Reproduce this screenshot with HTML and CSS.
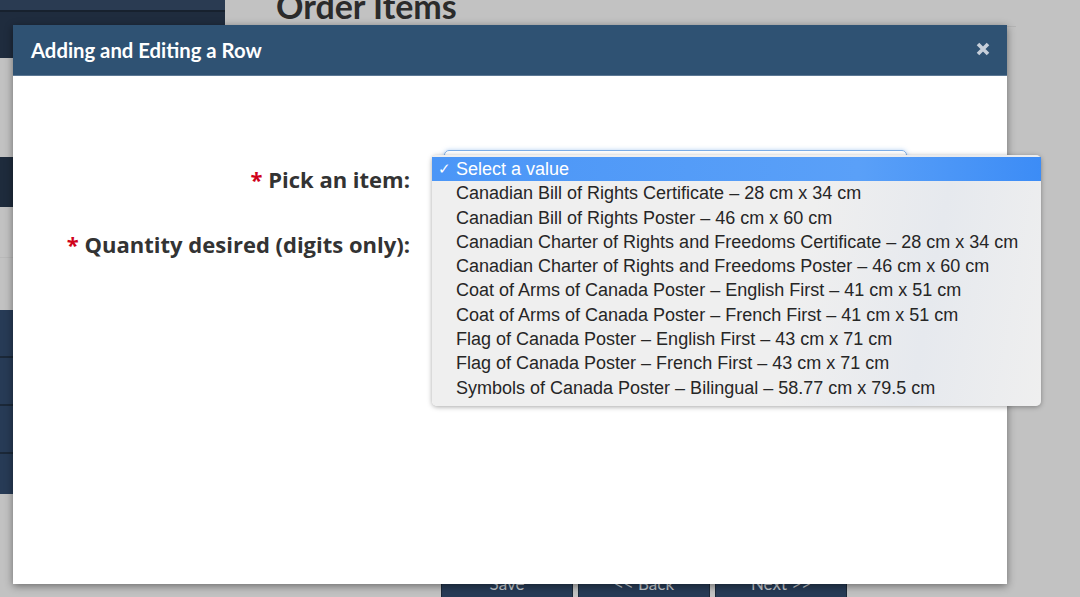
FILE: index.html
```html
<!DOCTYPE html>
<html lang="en">
<head>
  <meta charset="UTF-8">
  <meta name="viewport" content="width=device-width, initial-scale=1.0">
  <title>Order Items</title>
  <link rel="stylesheet" href="styles.css">
</head>
<body>

  <!-- Page behind the dialog (dimmed) -->
  <div class="page">
    <aside class="sidebar">
      <div class="side-top"><span class="side-line"></span></div>
      <div class="side-gap side-gap-1"></div>
      <div class="side-dark"></div>
      <div class="side-gap side-gap-2"></div>
      <div class="side-nav">
        <div class="side-item"></div>
        <div class="side-item"></div>
        <div class="side-item"></div>
        <div class="side-item last"></div>
      </div>
    </aside>

    <main class="main">
      <h1 class="page-title">Order Items</h1>
      <div class="main-spacer"></div>
      <div class="actions">
        <span class="btn">Save</span>
        <span class="btn">&lt;&lt; Back</span>
        <span class="btn">Next &gt;&gt;</span>
      </div>
    </main>
  </div>

  <!-- Modal -->
  <div class="modal">
    <div class="modal-header">
      <h2>Adding and Editing a Row</h2>
      <svg class="close" width="14" height="14" viewBox="0 0 14 14">
        <path d="M2 2 L12 12 M12 2 L2 12" stroke="#c6cfda" stroke-width="3.6" stroke-linecap="butt" fill="none"/>
      </svg>
    </div>

    <div class="modal-body">
      <form class="form-grid">
        <label class="field-label"><span class="req">*</span> Pick an item:</label>
        <div class="select-wrap">
          <div class="select-box"></div>

          <!-- Open dropdown list -->
          <ul class="popup">
            <li class="selected"><span class="check">&#10003;</span>Select a value</li>
            <li>Canadian Bill of Rights Certificate – 28 cm x 34 cm</li>
            <li>Canadian Bill of Rights Poster – 46 cm x 60 cm</li>
            <li>Canadian Charter of Rights and Freedoms Certificate – 28 cm x 34 cm</li>
            <li>Canadian Charter of Rights and Freedoms Poster – 46 cm x 60 cm</li>
            <li>Coat of Arms of Canada Poster – English First – 41 cm x 51 cm</li>
            <li>Coat of Arms of Canada Poster – French First – 41 cm x 51 cm</li>
            <li>Flag of Canada Poster – English First – 43 cm x 71 cm</li>
            <li>Flag of Canada Poster – French First – 43 cm x 71 cm</li>
            <li>Symbols of Canada Poster – Bilingual – 58.77 cm x 79.5 cm</li>
          </ul>
        </div>

        <label class="field-label"><span class="req">*</span> Quantity desired (digits only):</label>
        <div class="qty-wrap"></div>
      </form>
    </div>
  </div>

</body>
</html>
```

FILE: styles.css
```css
:root {
  --dim-bg: #c2c2c2;
  --header-color: #2f5273;
  --nav-dark: #1f2c3e;
  --nav-blue: #273b56;
  --label-color: #333333;
  --req-color: #d0021b;
}

html, body {
  margin: 0;
  padding: 0;
  width: 1080px;
  height: 597px;
  overflow: hidden;
  background-color: var(--dim-bg);
  font-family: 'Open Sans', sans-serif;
}

/* Dimmed page */
.page {
  display: flex;
  height: 597px;
}

.sidebar {
  width: 225px;
  display: flex;
  flex-direction: column;
}

.side-top {
  height: 58px;
  background-color: var(--nav-dark);
  border-top: 10px solid #2a3b52;
  box-sizing: border-box;
  position: relative;
}

.side-line {
  display: block;
  height: 2px;
  background-color: #17212e;
}

.side-gap-1 {
  height: 99px;
}

.side-dark {
  height: 50px;
  background-color: #1e2b3c;
}

.side-gap-2 {
  height: 103px;
  background: linear-gradient(#c2c2c2 50px, #b9b9b9 50px, #b9b9b9 51px, #c2c2c2 51px);
}

.side-item {
  height: 48px;
  background-color: var(--nav-blue);
  border-bottom: 2px solid #1b2838;
  box-sizing: border-box;
}

.side-item.last {
  height: 40px;
  border-bottom: none;
}

.main {
  flex: 1;
  display: flex;
  flex-direction: column;
  padding-left: 51px;
}

.page-title {
  margin: -17px 64px 0 0;
  font-family: 'Lato', sans-serif;
  font-weight: 700;
  font-size: 34px;
  color: #2b2b2b;
  line-height: 46px;
  height: 43px;
  border-bottom: 1px solid #b4b4b4;
}

.main-spacer {
  flex: 1;
}

.actions {
  display: flex;
  gap: 5px;
  margin-left: 165px;
  margin-bottom: -7px;
}

.btn {
  width: 132px;
  height: 42px;
  line-height: 42px;
  text-align: center;
  background-color: var(--nav-blue);
  border: 1px solid #1b2838;
  box-sizing: border-box;
  color: #c4c8cd;
  font-family: 'Lato', sans-serif;
  font-size: 17px;
}

/* Modal */
.modal {
  position: absolute;
  left: 13px;
  top: 25px;
  width: 994px;
  height: 559px;
  background-color: #ffffff;
  box-shadow: 0 2px 8px rgba(0, 0, 0, 0.45);
  display: flex;
  flex-direction: column;
}

.modal-header {
  height: 51px;
  background-color: var(--header-color);
  border-bottom: 1px solid #5c7894;
  box-sizing: border-box;
  display: flex;
  align-items: center;
  justify-content: space-between;
  padding: 0 17px 0 18px;
}

.modal-header h2 {
  margin: 0;
  font-family: 'Lato', sans-serif;
  font-weight: 700;
  font-size: 20.3px;
  color: #ffffff;
}

.close {
  margin-top: -3px;
}

.modal-body {
  flex: 1;
  padding-top: 74px;
}

.form-grid {
  display: grid;
  grid-template-columns: 397px 463px;
  grid-auto-rows: 65px;
  column-gap: 34px;
  margin: 0;
}

.field-label {
  text-align: right;
  font-weight: 700;
  font-size: 22px;
  line-height: 30px;
  margin-top: 14px;
  color: var(--label-color);
}

.req {
  color: var(--req-color);
}

.select-wrap {
  position: relative;
}

.select-box {
  height: 34px;
  border: 1px solid #7eaee6;
  border-radius: 5px;
  box-shadow: 0 0 4px rgba(102, 160, 230, 0.5);
}

/* Dropdown list */
.popup {
  position: absolute;
  left: -12px;
  top: 5px;
  width: 609px;
  margin: 0;
  padding: 2px 0 5px;
  list-style: none;
  background: linear-gradient(100deg, #efefef 60%, #e6e9ee 80%, #efefef);
  border-radius: 5px;
  box-shadow: 0 1px 5px rgba(0, 0, 0, 0.35);
  font-family: 'Liberation Sans', Arial, sans-serif;
  font-size: 18px;
  color: #262626;
  box-sizing: border-box;
  height: 251px;
}

.popup li {
  height: 24.3px;
  line-height: 24.3px;
  padding-left: 24px;
  white-space: nowrap;
  position: relative;
}

.popup li.selected {
  background: linear-gradient(90deg, #4b96f7, #5aa0f8 70%, #3c8cf6);
  color: #ffffff;
}

.check {
  position: absolute;
  left: 6px;
  font-size: 15px;
}

.qty-wrap {
  height: 30px;
}
```
